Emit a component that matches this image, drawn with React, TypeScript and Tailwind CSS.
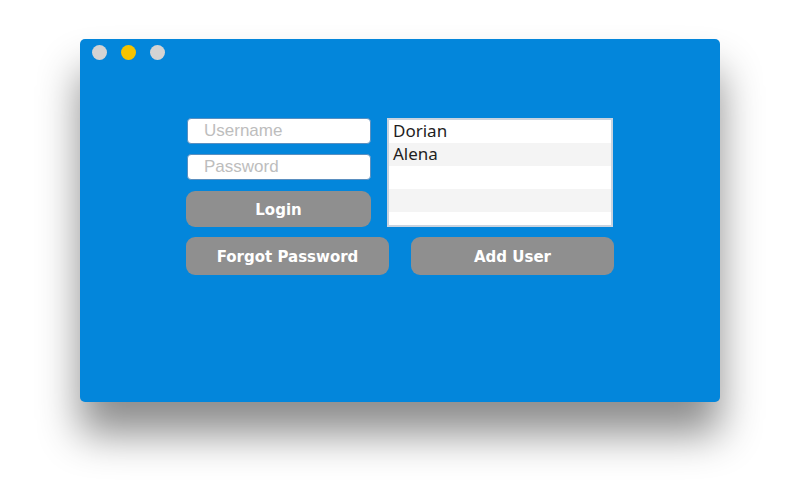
import React from 'react';

const users = ['Dorian', 'Alena', '', '', ''];

export default function App() {
  return (
    <div className="w-[800px] h-[500px] bg-white pt-[39px] pl-[80px] overflow-hidden">
      <div className="w-[640px] h-[363px] bg-[#0386db] rounded-[5px] shadow-[0_32px_42px_rgba(0,0,0,0.45)] flex flex-col">
        {/* Window controls */}
        <div className="flex items-center gap-[14px] pl-[12px] h-[26px]">
          <span className="w-[15px] h-[15px] rounded-full bg-[#d3d3d3]" />
          <span className="w-[15px] h-[15px] rounded-full bg-[#f6c300]" />
          <span className="w-[15px] h-[15px] rounded-full bg-[#d3d3d3]" />
        </div>

        <div className="pl-[106px] pt-[53px] flex flex-col gap-[10px]" style={{ fontFamily: '"DejaVu Sans", sans-serif' }}>
          <div className="flex gap-[16px]">
            <div className="w-[185px] flex flex-col">
              <input
                placeholder="Username"
                className="h-[26px] ml-[1px] w-[184px] bg-white rounded-[4px] border border-[#5a8fc0] pl-[16px] text-[17px] placeholder:text-[#bdbdbd] outline-none"
                style={{ fontFamily: '"Liberation Sans", sans-serif' }}
              />
              <input
                placeholder="Password"
                className="h-[26px] mt-[10px] ml-[1px] w-[184px] bg-white rounded-[4px] border border-[#5a8fc0] pl-[16px] text-[17px] placeholder:text-[#bdbdbd] outline-none"
                style={{ fontFamily: '"Liberation Sans", sans-serif' }}
              />
              <button className="mt-[11px] h-[36px] w-[185px] bg-[#8f8f8f] rounded-[9px] text-white font-bold text-[15px] pt-[3px]">
                Login
              </button>
            </div>
            <div className="w-[226px] h-[109px] bg-white border-2 border-[#c9d3df] overflow-hidden" style={{ fontFamily: '"Noto Sans", sans-serif' }}>
              {users.map((u, i) => (
                <div
                  key={i}
                  className={`h-[23px] pl-[4px] text-[17px] leading-[22px] text-[#1e1e1e] ${i % 2 === 1 ? 'bg-[#f4f4f4]' : 'bg-white'}`}
                >
                  {u}
                </div>
              ))}
            </div>
          </div>
          <div className="flex gap-[22px]">
            <button className="h-[38px] w-[203px] bg-[#8f8f8f] rounded-[9px] text-white font-bold text-[15px] pt-[2px]">
              Forgot Password
            </button>
            <button className="h-[38px] w-[203px] bg-[#8f8f8f] rounded-[9px] text-white font-bold text-[15px] pt-[2px]">
              Add User
            </button>
          </div>
        </div>
      </div>
    </div>
  );
}
